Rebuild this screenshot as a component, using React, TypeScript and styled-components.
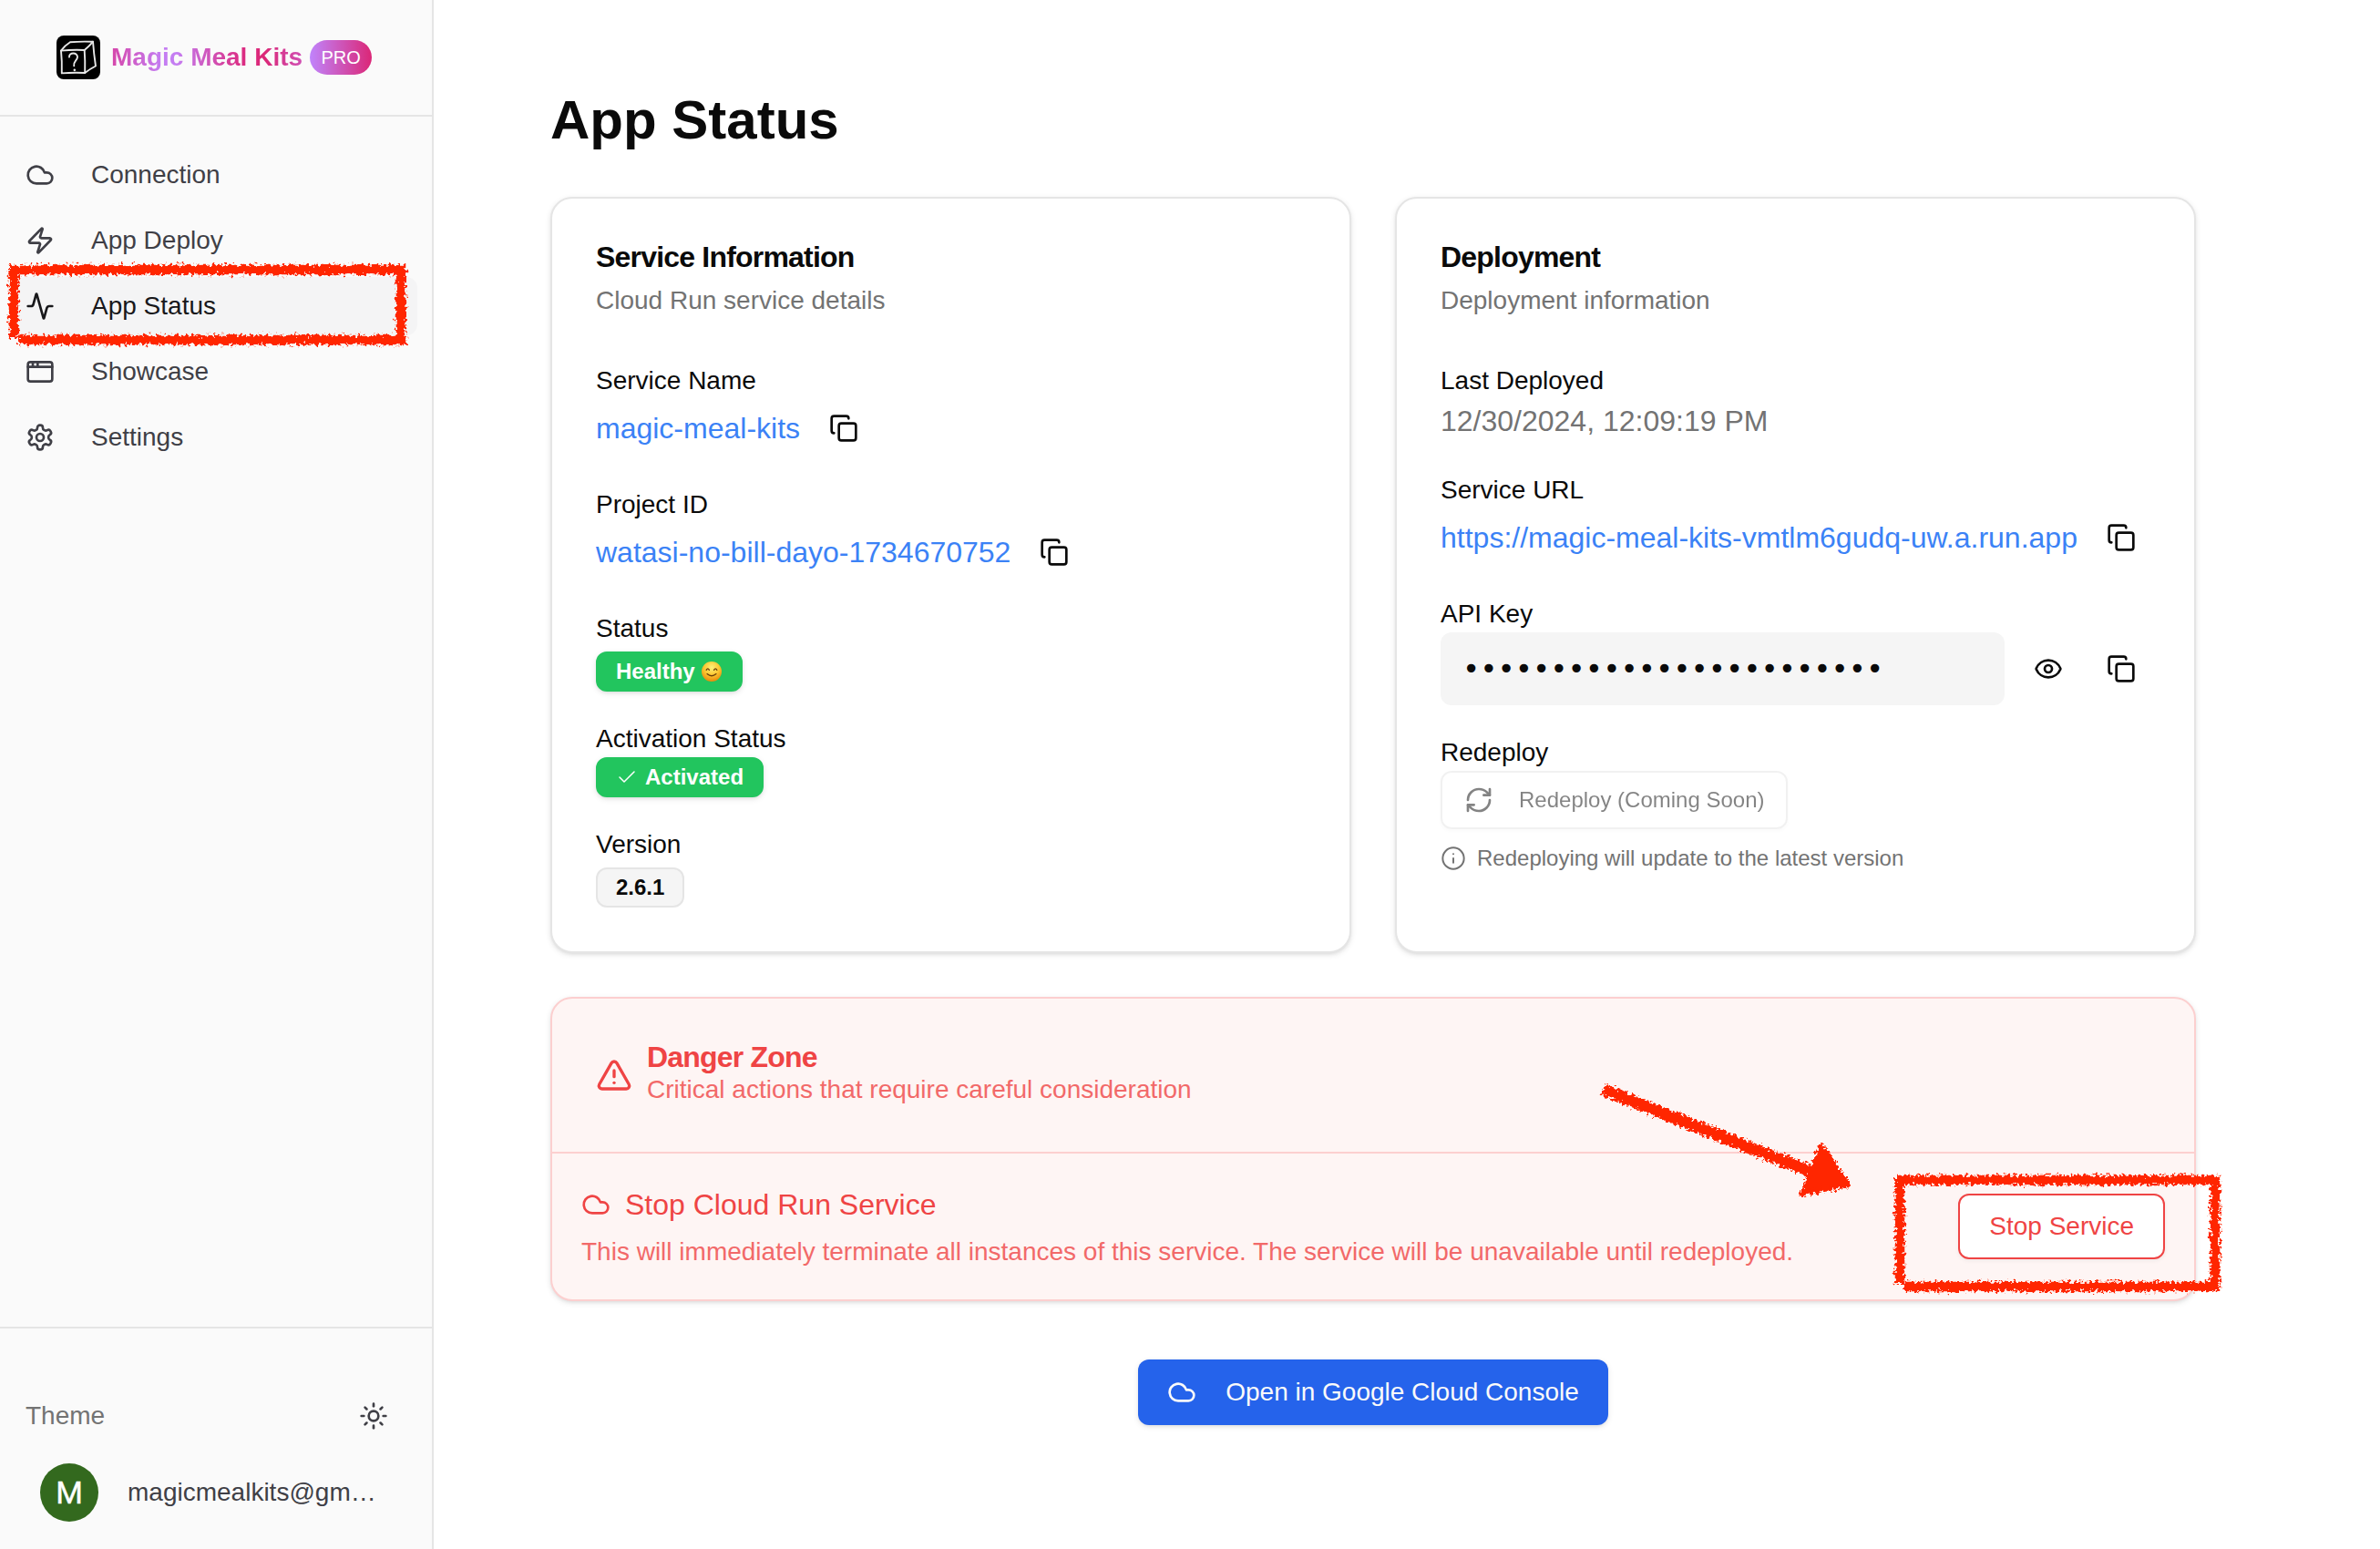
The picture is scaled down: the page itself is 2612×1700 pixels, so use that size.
import React from "react";
import styled, { createGlobalStyle, css } from "styled-components";
import {
  Activity,
  AppWindow,
  Check,
  Cloud,
  Copy,
  Eye,
  Info,
  RefreshCw,
  Sun,
  TriangleAlert,
  Zap,
} from "lucide-react";

const GlobalStyle = createGlobalStyle`
  *, *::before, *::after { box-sizing: border-box; }
  html, body { margin: 0; padding: 0; background: #fff; }
  body {
    font-family: "Liberation Sans", Arial, Helvetica, sans-serif;
    color: #0a0a0a;
    font-size: 28px;
    line-height: 40px;
    overflow: hidden;
  }
  h1, h2, h3, p { margin: 0; }
  svg { display: block; flex-shrink: 0; }
  button { font: inherit; color: inherit; background: none; border: 0; padding: 0; }
`;

const Shell = styled.div`
  position: relative;
  display: flex;
  width: 2612px;
  height: 1700px;
  overflow: hidden;
`;

/* Sidebar */

const Sidebar = styled.aside`
  display: flex;
  flex-direction: column;
  width: 476px;
  flex-shrink: 0;
  background: #fafafa;
  border-right: 2px solid #e5e5e5;
`;

const Brand = styled.header`
  display: flex;
  align-items: center;
  height: 128px;
  padding: 0 62px;
  border-bottom: 2px solid #e5e5e5;
`;

const BrandName = styled.span`
  margin: 0 8px 0 12px;
  font-weight: 700;
  white-space: nowrap;
  color: transparent;
  background: linear-gradient(90deg, #d646aa 0, #c47df2 26%, #c47df2 34%, #db2d84 68%, #db2777 80%, #d050b4 100%);
  background-clip: text;
  -webkit-background-clip: text;
`;

const ProBadge = styled.span`
  width: 68px;
  height: 38px;
  border-radius: 19px;
  font-size: 20px;
  line-height: 38px;
  text-align: center;
  color: #fff;
  background: linear-gradient(90deg, #c084fc, #db2777);
`;

const Nav = styled.nav`
  display: flex;
  flex-direction: column;
  gap: 8px;
  flex: 1;
  padding: 32px 16px;
`;

const NavItem = styled.a<{ $active?: boolean }>`
  display: flex;
  align-items: center;
  gap: 40px;
  height: 64px;
  padding: 0 12px;
  border-radius: 12px;
  color: #3f3f46;
  ${(p) =>
    p.$active &&
    css`
      color: #18181b;
      background: #f4f4f5;
    `}
`;

const SidebarFooter = styled.footer`
  display: flex;
  flex-direction: column;
  height: 244px;
  padding: 64px 28px 0;
  border-top: 2px solid #e5e5e5;
  color: #3f3f46;
`;

const ThemeRow = styled.div`
  display: flex;
  align-items: center;
  justify-content: space-between;
  height: 64px;
  padding-right: 20px;
`;

const Muted = styled.span`
  color: #737373;
`;

const Account = styled.div`
  display: flex;
  align-items: center;
  gap: 32px;
  margin-top: 20px;
  padding-left: 16px;
`;

const Avatar = styled.span`
  width: 64px;
  height: 64px;
  border-radius: 50%;
  background: #33691e;
  color: #fff;
  font: 400 34px/65px Roboto, sans-serif;
  -webkit-text-stroke: 0.4px #fff;
  text-align: center;
`;

/* Main column */

const Main = styled.main`
  display: flex;
  flex-direction: column;
  flex: 1;
  padding: 96px 202px 0 128px;
`;

const PageTitle = styled.h1`
  height: 120px;
  font-size: 60px;
  line-height: 72px;
  font-weight: 700;
`;

const CardGrid = styled.div`
  display: grid;
  grid-template-columns: 1fr 1fr;
  gap: 48px;
`;

const cardFrame = css`
  border: 2px solid #e5e5e5;
  border-radius: 24px;
  box-shadow: 0 2px 6px rgba(0, 0, 0, 0.1), 0 2px 4px -2px rgba(0, 0, 0, 0.1);
`;

const Card = styled.section`
  ${cardFrame}
  height: 830px;
  padding: 48px;
  background: #fff;
`;

const CardTitle = styled.h2`
  font-size: 32px;
  line-height: 32px;
  font-weight: 700;
  letter-spacing: -0.8px;
`;

const CardSubtitle = styled.p`
  margin: 12px 0 48px;
  color: #737373;
`;

const Fields = styled.div`
  display: flex;
  flex-direction: column;
  gap: 32px;
`;

const Field = styled.div`
  display: flex;
  flex-direction: column;
  align-items: flex-start;
`;

const ValueRow = styled.div`
  display: flex;
  align-items: center;
  gap: 16px;
  width: 100%;
  min-height: 64px;
`;

const ValueLink = styled.a`
  font-size: 32px;
  line-height: 48px;
  color: #3b82f6;
  white-space: nowrap;
`;

const Timestamp = styled.span`
  font-size: 32px;
  line-height: 48px;
  color: #737373;
`;

const IconButton = styled.button`
  display: grid;
  place-items: center;
  width: 64px;
  height: 64px;
  flex-shrink: 0;
`;

const Badge = styled.span<{ $tone: "success" | "neutral"; $offset?: boolean }>`
  display: inline-flex;
  align-items: center;
  height: 44px;
  margin-top: ${(p) => (p.$offset ? 5 : 0)}px;
  padding: 0 20px;
  border-radius: 12px;
  font-size: 24px;
  line-height: 32px;
  font-weight: 700;
  white-space: pre;
  ${(p) =>
    p.$tone === "success"
      ? css`
          color: #fff;
          background: #22c55e;
          border: 2px solid #22c55e;
          box-shadow: 0 2px 6px rgba(0, 0, 0, 0.1), 0 2px 4px -2px rgba(0, 0, 0, 0.1);
        `
      : css`
          background: #f5f5f5;
          border: 2px solid #e5e5e5;
        `}
`;

const BadgeCheck = styled(Check)`
  margin-right: 8px;
`;

const SecretBox = styled.code`
  flex: 1;
  height: 80px;
  padding: 0 24px;
  border-radius: 12px;
  background: #f5f5f5;
  font: 32px/80px "DejaVu Sans Mono", monospace;
`;

const button = css`
  display: inline-flex;
  align-items: center;
  border-radius: 12px;
  white-space: nowrap;
`;

const RedeployButton = styled.button`
  ${button}
  height: 64px;
  gap: 28px;
  padding: 0 24px;
  font-size: 24px;
  line-height: 32px;
  border: 2px solid #e5e5e5;
  box-shadow: 0 2px 4px rgba(0, 0, 0, 0.05);
  opacity: 0.5;
`;

const Hint = styled.p`
  display: flex;
  align-items: center;
  gap: 12px;
  margin-top: 16px;
  height: 32px;
  font-size: 24px;
  line-height: 32px;
  color: #737373;
`;

/* Danger zone */

const DangerCard = styled.section`
  ${cardFrame}
  margin-top: 48px;
  border-color: #fccfcf;
  background: #fef5f4;
  color: #ef4444;
`;

const DangerHeader = styled.header`
  display: flex;
  align-items: center;
  gap: 16px;
  padding: 48px;
  border-bottom: 2px solid #fccfcf;
`;

const DangerBody = styled.div`
  display: flex;
  align-items: center;
  justify-content: space-between;
  height: 160px;
  padding: 32px;
`;

const DangerText = styled.p`
  color: #f26969;
`;

const ActionTitle = styled.h3`
  display: flex;
  align-items: center;
  gap: 16px;
  margin-bottom: 8px;
  font-size: 32px;
  line-height: 48px;
  font-weight: 400;
`;

const StopButton = styled.button`
  ${button}
  height: 72px;
  padding: 0 32px;
  border: 2px solid #ef4444;
  background: #fff;
  box-shadow: 0 2px 4px rgba(0, 0, 0, 0.05);
`;

const ConsoleButton = styled.button`
  ${button}
  align-self: center;
  height: 72px;
  gap: 32px;
  margin-top: 64px;
  padding: 0 32px;
  background: #2563eb;
  color: #fafafa;
  box-shadow: 0 2px 6px rgba(0, 0, 0, 0.1), 0 2px 4px -2px rgba(0, 0, 0, 0.1);
`;

/* Crayon marks laid over the page */

const Marks = styled.svg`
  position: absolute;
  inset: 0;
  pointer-events: none;
`;

const BoxLogo = () => (
  <svg width="48" height="48" viewBox="0 0 48 48" fill="none">
    <rect width="48" height="48" rx="8" fill="#000" />
    <g stroke="#e8e8e8" strokeWidth="1.9" strokeLinecap="round" strokeLinejoin="round">
      <path d="M5 16.6 Q18 15.4 30.7 16 Q31.6 28 31.2 41 Q18 40.4 5.8 41.4 Q6.2 28 5 16.6 Z" />
      <path d="M5 16.6 Q9 11 15 7.2 Q28 6.2 40 6.8 Q35.5 12 30.7 16" />
      <path d="M40 6.8 Q41 20 43 33.5 Q37 36.5 31.2 41" />
      <path d="M14 23.6 C13.6 18.2 23 18 23 23.6 C22.6 28 18.4 28 19.2 33.4" />
      <path d="M19.8 37.6 V38" strokeWidth="2.4" />
    </g>
  </svg>
);

const GearIcon = () => (
  <svg
    width="32"
    height="32"
    viewBox="0 0 24 24"
    fill="none"
    stroke="currentColor"
    strokeWidth="2"
    strokeLinecap="round"
    strokeLinejoin="round"
  >
    <path d="M12.22 2h-.44a2 2 0 0 0-2 2v.18a2 2 0 0 1-1 1.73l-.43.25a2 2 0 0 1-2 0l-.15-.08a2 2 0 0 0-2.73.73l-.22.38a2 2 0 0 0 .73 2.73l.15.1a2 2 0 0 1 1 1.72v.51a2 2 0 0 1-1 1.74l-.15.09a2 2 0 0 0-.73 2.73l.22.38a2 2 0 0 0 2.73.73l.15-.08a2 2 0 0 1 2 0l.43.25a2 2 0 0 1 1 1.73V20a2 2 0 0 0 2 2h.44a2 2 0 0 0 2-2v-.18a2 2 0 0 1 1-1.73l.43-.25a2 2 0 0 1 2 0l.15.08a2 2 0 0 0 2.73-.73l.22-.39a2 2 0 0 0-.73-2.73l-.15-.08a2 2 0 0 1-1-1.74v-.5a2 2 0 0 1 1-1.74l.15-.09a2 2 0 0 0 .73-2.73l-.22-.38a2 2 0 0 0-2.73-.73l-.15.08a2 2 0 0 1-2 0l-.43-.25a2 2 0 0 1-1-1.73V4a2 2 0 0 0-2-2z" />
    <circle cx="12" cy="12" r="3" />
  </svg>
);

const SmileIcon = () => (
  <svg width="24" height="24" viewBox="0 0 24 24" fill="none">
    <defs>
      <radialGradient id="face" cx="50%" cy="30%" r="70%">
        <stop offset="0" stopColor="#fff27a" />
        <stop offset="0.55" stopColor="#fcc62f" />
        <stop offset="1" stopColor="#e8890c" />
      </radialGradient>
    </defs>
    <circle cx="12" cy="12" r="11" fill="url(#face)" />
    <path d="M6.2 10.4 Q7.8 7.2 9.4 10.4 M14.6 10.4 Q16.2 7.2 17.8 10.4" stroke="#6b3f0a" strokeWidth="1.3" strokeLinecap="round" />
    <path d="M7 14.6 Q12 19 17 14.6" stroke="#6b3f0a" strokeWidth="1.3" strokeLinecap="round" />
  </svg>
);

const CopyButton = () => (
  <IconButton aria-label="Copy">
    <Copy size={32} />
  </IconButton>
);

const navItems = [
  { label: "Connection", icon: <Cloud size={32} /> },
  { label: "App Deploy", icon: <Zap size={32} /> },
  { label: "App Status", icon: <Activity size={32} />, active: true },
  { label: "Showcase", icon: <AppWindow size={32} /> },
  { label: "Settings", icon: <GearIcon /> },
];

export default function App() {
  return (
    <Shell>
      <GlobalStyle />
      <Sidebar>
        <Brand>
          <BoxLogo />
          <BrandName>Magic Meal Kits</BrandName>
          <ProBadge>PRO</ProBadge>
        </Brand>
        <Nav>
          {navItems.map((item) => (
            <NavItem key={item.label} $active={item.active}>
              {item.icon}
              {item.label}
            </NavItem>
          ))}
        </Nav>
        <SidebarFooter>
          <ThemeRow>
            <Muted>Theme</Muted>
            <Sun size={32} />
          </ThemeRow>
          <Account>
            <Avatar>M</Avatar>
            <span>magicmealkits@gm…</span>
          </Account>
        </SidebarFooter>
      </Sidebar>

      <Main>
        <PageTitle>App Status</PageTitle>
        <CardGrid>
          <Card>
            <CardTitle>Service Information</CardTitle>
            <CardSubtitle>Cloud Run service details</CardSubtitle>
            <Fields>
              <Field>
                <span>Service Name</span>
                <ValueRow>
                  <ValueLink>magic-meal-kits</ValueLink>
                  <CopyButton />
                </ValueRow>
              </Field>
              <Field>
                <span>Project ID</span>
                <ValueRow>
                  <ValueLink>watasi-no-bill-dayo-1734670752</ValueLink>
                  <CopyButton />
                </ValueRow>
              </Field>
              <Field>
                <span>Status</span>
                <Badge $tone="success" $offset>
                  {"Healthy "}
                  <SmileIcon />
                </Badge>
              </Field>
              <Field>
                <span>Activation Status</span>
                <Badge $tone="success">
                  <BadgeCheck size={24} strokeWidth={1.5} />
                  Activated
                </Badge>
              </Field>
              <Field>
                <span>Version</span>
                <Badge $tone="neutral" $offset>
                  2.6.1
                </Badge>
              </Field>
            </Fields>
          </Card>

          <Card>
            <CardTitle>Deployment</CardTitle>
            <CardSubtitle>Deployment information</CardSubtitle>
            <Fields>
              <Field>
                <span>Last Deployed</span>
                <Timestamp>12/30/2024, 12:09:19 PM</Timestamp>
              </Field>
              <Field>
                <span>Service URL</span>
                <ValueRow>
                  <ValueLink>https://magic-meal-kits-vmtlm6gudq-uw.a.run.app</ValueLink>
                  <CopyButton />
                </ValueRow>
              </Field>
              <Field>
                <span>API Key</span>
                <ValueRow>
                  <SecretBox>{"•".repeat(24)}</SecretBox>
                  <IconButton aria-label="Show key">
                    <Eye size={32} />
                  </IconButton>
                  <CopyButton />
                </ValueRow>
              </Field>
              <Field>
                <span>Redeploy</span>
                <RedeployButton disabled>
                  <RefreshCw size={32} />
                  Redeploy (Coming Soon)
                </RedeployButton>
                <Hint>
                  <Info size={28} strokeWidth={1.7} />
                  Redeploying will update to the latest version
                </Hint>
              </Field>
            </Fields>
          </Card>
        </CardGrid>

        <DangerCard>
          <DangerHeader>
            <TriangleAlert size={40} />
            <div>
              <CardTitle>Danger Zone</CardTitle>
              <DangerText>Critical actions that require careful consideration</DangerText>
            </div>
          </DangerHeader>
          <DangerBody>
            <div>
              <ActionTitle>
                <Cloud size={32} />
                Stop Cloud Run Service
              </ActionTitle>
              <DangerText>
                This will immediately terminate all instances of this service. The service will be
                unavailable until redeployed.
              </DangerText>
            </div>
            <StopButton>Stop Service</StopButton>
          </DangerBody>
        </DangerCard>

        <ConsoleButton>
          <Cloud size={32} />
          Open in Google Cloud Console
        </ConsoleButton>
      </Main>

      <Marks width="2612" height="1700" viewBox="0 0 2612 1700" fill="none">
        <defs>
          <filter
            id="crayon"
            x="0"
            y="0"
            width="2612"
            height="1700"
            filterUnits="userSpaceOnUse"
            colorInterpolationFilters="sRGB"
          >
            <feTurbulence type="fractalNoise" baseFrequency="0.3" numOctaves="2" seed="4" result="noise" />
            <feDisplacementMap in="SourceGraphic" in2="noise" scale="11" xChannelSelector="R" yChannelSelector="G" />
          </filter>
        </defs>
        <g filter="url(#crayon)" stroke="#ff2600" strokeWidth="10.5">
          <path d="M10 296 H440 V373 H20 M15 296 V371" />
          <path d="M2080 1295 H2431 V1412 H2090 M2085 1295 V1410" />
          <path d="M1760 1196 L1990 1287" strokeWidth="13" />
          <path d="M1999 1258 L2028 1300 L1978 1310 Z" fill="#ff2600" strokeWidth="6" strokeLinejoin="round" />
        </g>
      </Marks>
    </Shell>
  );
}
